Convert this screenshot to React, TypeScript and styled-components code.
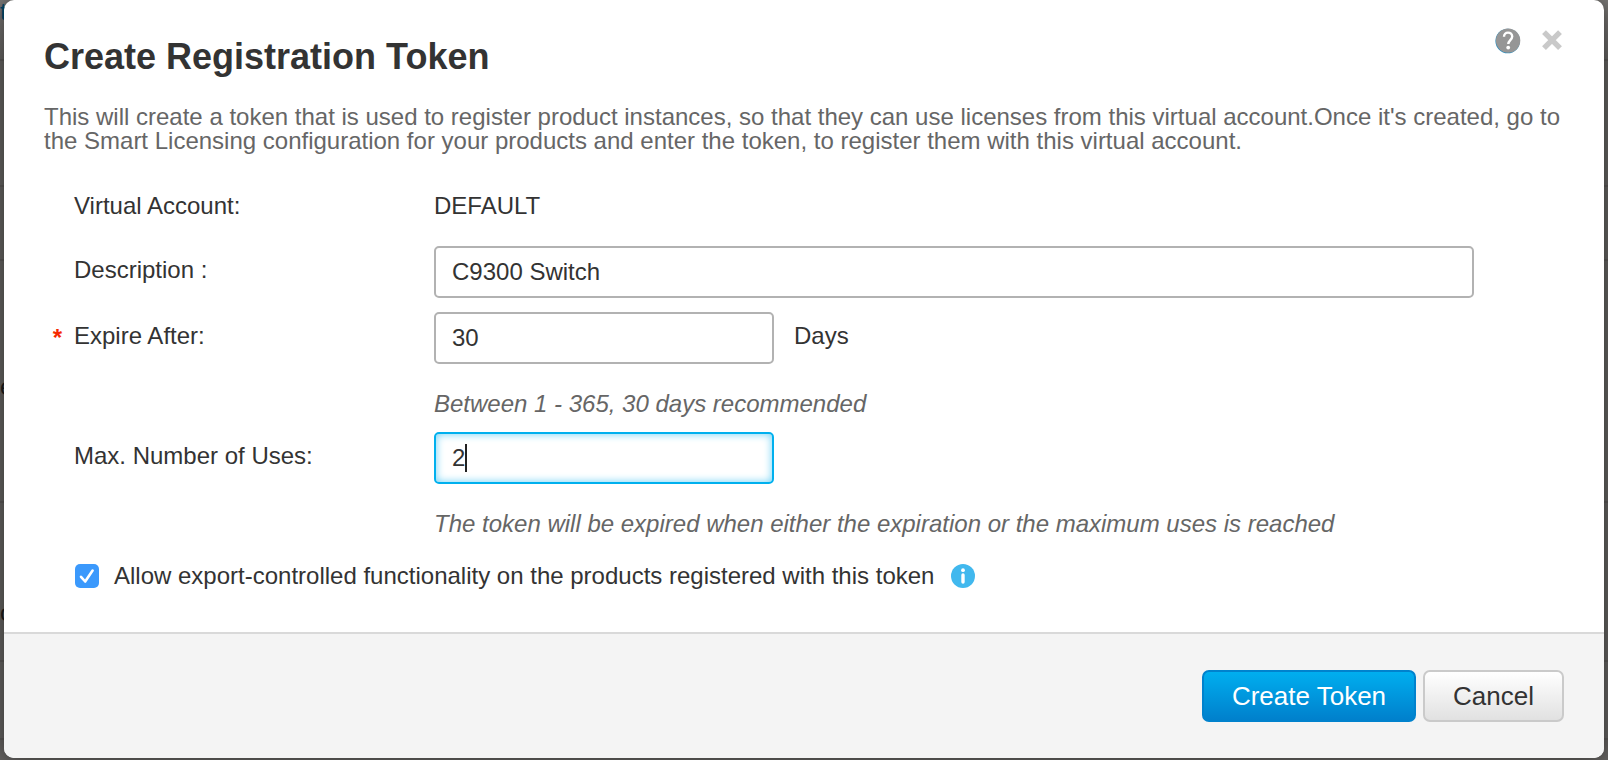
import React, { useState } from "react";
import styled, { createGlobalStyle, css } from "styled-components";

const GlobalStyle = createGlobalStyle`
  *, *::before, *::after { box-sizing: border-box; }
  body {
    margin: 0;
    background: #656361;
    color: #333;
    font-family: "Liberation Sans", Arial, sans-serif;
    font-size: 24px;
    line-height: 24px;
  }
`;

const Page = styled.div`
  position: relative;
  min-height: 100vh;
  overflow: hidden;
`;

/* The dimmed page that lies behind the dialog. */
const Backdrop = styled.div`
  position: absolute;
  inset: 0;
  overflow: hidden;
  background: linear-gradient(#7c7a78, #656361 60px, #656361);
`;

const BackdropRow = styled.div<{ $height: number; $top?: number; $link?: boolean }>`
  height: ${(p) => p.$height}px;
  padding-top: ${(p) => p.$top ?? 0}px;
  border-bottom: 2px solid #5a5856;
  color: ${(p) => (p.$link ? "#00496b" : "#1c1c1c")};
`;

const Dialog = styled.form`
  position: relative;
  margin: 0 4px 2px;
  background: #fff;
  border-radius: 10px;
  box-shadow: 0 0 20px rgba(0, 0, 0, 0.5);
  overflow: hidden;
`;

const Header = styled.header`
  display: flex;
  justify-content: space-between;
  align-items: flex-start;
  padding: 28px 41px 0 40px;
`;

const Title = styled.h1`
  margin: 9px 0 0;
  font-size: 36px;
  line-height: 40px;
  font-weight: bold;
`;

const HeaderTools = styled.div`
  display: flex;
  gap: 20px;
`;

const IconButton = styled.button`
  display: flex;
  padding: 0;
  border: 0;
  background: none;
  cursor: pointer;
`;

const Intro = styled.p`
  margin: 28px 40px 0;
  color: #666;
`;

const Fields = styled.div`
  padding: 41px 130px 44px 70px;
`;

const Row = styled.div<{ $gap: number; $plain?: boolean }>`
  display: grid;
  grid-template-columns: 360px minmax(0, 1fr);
  margin-bottom: ${(p) => p.$gap}px;
  ${(p) =>
    !p.$plain &&
    css`
      & > label,
      & > div > span {
        padding-top: 12px;
      }
    `}
`;

const Label = styled.label`
  position: relative;
`;

const Required = styled.span`
  position: absolute;
  top: 14px;
  right: 100%;
  margin-right: 12px;
  color: #f52a00;
  font-weight: bold;
`;

const Control = styled.div`
  display: flex;
  flex-wrap: wrap;
  column-gap: 20px;
  position: relative;
`;

const TextInput = styled.input<{ $short?: boolean; $active?: boolean }>`
  width: ${(p) => (p.$short ? "340px" : "100%")};
  height: 52px;
  padding: 0 16px;
  border: 2px solid ${(p) => (p.$active ? "#00b0ee" : "#b2b2b2")};
  border-radius: 5px;
  outline: 0;
  background: #fff;
  box-shadow: ${(p) => (p.$active ? "inset 0 0 8px #6bd0f5" : "none")};
  color: #333;
  font: inherit;
  caret-color: transparent;
`;

const Caret = styled.i`
  position: absolute;
  top: 12px;
  left: 31px;
  width: 2px;
  height: 28px;
  background: #222;
`;

const Hint = styled.p`
  flex-basis: 100%;
  margin: 28px 0 0;
  color: #666;
  font-style: italic;
`;

const CheckRow = styled.div`
  display: flex;
  align-items: center;
`;

const CheckBox = styled.input`
  appearance: none;
  width: 24px;
  height: 24px;
  margin: 0 15px 0 1px;
  border-radius: 5px;
  background: #3b99fc;
`;

const CheckHolder = styled.span`
  position: relative;
  display: flex;

  svg {
    position: absolute;
    left: 1px;
    top: 0;
    pointer-events: none;
  }
  input:not(:checked) {
    background: #fff;
    border: 2px solid #b2b2b2;
  }
  input:not(:checked) + svg {
    display: none;
  }
`;

const InfoButton = styled(IconButton)`
  margin-left: 17px;
`;

const Footer = styled.footer`
  display: flex;
  justify-content: flex-end;
  gap: 7px;
  padding: 36px 40px;
  border-top: 2px solid #d9d9d9;
  background: #f4f4f4;
`;

const Button = styled.button<{ $primary?: boolean }>`
  height: 52px;
  padding: 0 28px;
  border: 2px solid ${(p) => (p.$primary ? "#0082cd" : "#cacaca")};
  border-radius: 7px;
  background: ${(p) =>
    p.$primary ? "linear-gradient(#00aeef, #0080cc)" : "linear-gradient(#fff, #e1e1e1)"};
  color: ${(p) => (p.$primary ? "#fff" : "#333")};
  font: inherit;
  font-size: 26px;
  cursor: pointer;
`;

const HelpIcon = () => (
  <svg width="26" height="26" viewBox="0 0 26 26" aria-hidden="true">
    <circle cx="12.7" cy="13" r="12.3" fill="#2b8cbc" />
    <circle cx="13.1" cy="12.6" r="12.2" fill="#969696" />
    <path d="M9 8.8C9 6.2 10.6 4.6 13 4.6s4.2 1.6 4.2 4c0 3.2-3.9 3.9-3.9 7.4" fill="none" stroke="#fff" strokeWidth="2.4" />
    <circle cx="13.2" cy="19.6" r="1.9" fill="#fff" />
  </svg>
);

const CloseIcon = () => (
  <svg width="22" height="26" viewBox="0 0 22 26" aria-hidden="true">
    <path d="M3 4.2 19 20.2M19 4.2 3 20.2" stroke="#c9c9c9" strokeWidth="5.4" />
  </svg>
);

const InfoIcon = () => (
  <svg width="24" height="24" viewBox="0 0 24 24" aria-hidden="true">
    <circle cx="12" cy="12" r="12" fill="#41b8ee" />
    <circle cx="12" cy="6.2" r="1.9" fill="#fff" />
    <path d="M12 11v7" stroke="#fff" strokeWidth="3.4" strokeLinecap="round" />
  </svg>
);

export default function App() {
  const [description, setDescription] = useState("C9300 Switch");
  const [days, setDays] = useState("30");
  const [uses, setUses] = useState("2");
  const [allowExport, setAllowExport] = useState(true);

  return (
    <>
      <GlobalStyle />
      <Page>
        <Backdrop aria-hidden="true">
          <BackdropRow $height={61} $link>t</BackdropRow>
          <BackdropRow $height={126} />
          <BackdropRow $height={74} />
          <BackdropRow $height={242} $top={114}>e</BackdropRow>
          <BackdropRow $height={159} $top={98}>o</BackdropRow>
          <BackdropRow $height={78} />
        </Backdrop>
        <Dialog role="dialog" aria-labelledby="dialog-title" onSubmit={(e: React.FormEvent) => e.preventDefault()}>
          <Header>
            <Title id="dialog-title">Create Registration Token</Title>
            <HeaderTools>
              <IconButton type="button" aria-label="Help"><HelpIcon /></IconButton>
              <IconButton type="button" aria-label="Close"><CloseIcon /></IconButton>
            </HeaderTools>
          </Header>
          <Intro>
            This will create a token that is used to register product instances, so that they can use
            licenses from this virtual account.Once it's created, go to the Smart Licensing
            configuration for your products and enter the token, to register them with this virtual
            account.
          </Intro>
          <Fields>
            <Row $gap={28} $plain>
              <Label as="span">Virtual Account:</Label>
              <span>DEFAULT</span>
            </Row>
            <Row $gap={14}>
              <Label htmlFor="description">Description :</Label>
              <Control>
                <TextInput id="description" value={description} onChange={(e) => setDescription(e.target.value)} />
              </Control>
            </Row>
            <Row $gap={16}>
              <Label htmlFor="days"><Required>*</Required>Expire After:</Label>
              <Control>
                <TextInput id="days" $short value={days} onChange={(e) => setDays(e.target.value)} />
                <span>Days</span>
                <Hint>Between 1 - 365, 30 days recommended</Hint>
              </Control>
            </Row>
            <Row $gap={28}>
              <Label htmlFor="uses">Max. Number of Uses:</Label>
              <Control>
                <TextInput id="uses" $short $active value={uses} onChange={(e) => setUses(e.target.value)} />
                <Caret />
                <Hint>The token will be expired when either the expiration or the maximum uses is reached</Hint>
              </Control>
            </Row>
            <CheckRow>
              <CheckHolder>
                <CheckBox id="export" type="checkbox" checked={allowExport} onChange={(e) => setAllowExport(e.target.checked)} />
                <svg width="24" height="24" viewBox="0 0 24 24" aria-hidden="true">
                  <path d="M6 12.8 10.2 17.5 17.6 6.5" fill="none" stroke="#fff" strokeWidth="2.6" strokeLinecap="round" strokeLinejoin="round" />
                </svg>
              </CheckHolder>
              <label htmlFor="export">Allow export-controlled functionality on the products registered with this token</label>
              <InfoButton type="button" aria-label="More information"><InfoIcon /></InfoButton>
            </CheckRow>
          </Fields>
          <Footer>
            <Button type="submit" $primary>Create Token</Button>
            <Button type="button">Cancel</Button>
          </Footer>
        </Dialog>
      </Page>
    </>
  );
}
